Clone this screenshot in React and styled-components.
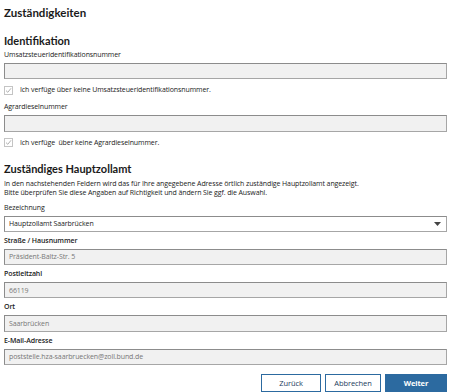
import React from "react";
import styled, { createGlobalStyle } from "styled-components";

const Global = createGlobalStyle`
  html, body {
    margin: 0;
    padding: 0;
    background: #fff;
  }
  body {
    font-family: "Open Sans", "Liberation Sans", sans-serif;
    color: #1a1a1a;
  }
`;

const Page = styled.div`
  width: 450px;
  height: 392px;
  box-sizing: border-box;
  padding: 5px 3px 0 4px;
  display: flex;
  flex-direction: column;
  overflow: hidden;
`;

const Title = styled.h1`
  margin: 0;
  font-family: Lato, "Open Sans", sans-serif;
  font-size: 11.5px;
  line-height: 16px;
  font-weight: 700;
`;

const Section = styled.h2`
  margin: ${(p) => p.$top}px 0 0;
  font-family: Lato, "Open Sans", sans-serif;
  font-size: 11px;
  line-height: 14px;
  font-weight: 700;
`;

const Label = styled.label`
  display: block;
  margin-top: ${(p) => p.$top ?? 4}px;
  font-size: 7px;
  line-height: 10px;
  font-weight: ${(p) => (p.$bold ? 600 : 400)};
  letter-spacing: -0.1px;
`;

const Field = styled.div`
  box-sizing: border-box;
  height: 18px;
  margin-top: 3px;
  border: 1px solid #a6a6a6;
  border-left-color: #8c8c8c;
  border-top-color: #8c8c8c;
  background: ${(p) => (p.$white ? "#fff" : "#f1f1f1")};
  display: flex;
  align-items: center;
  justify-content: space-between;
  padding: 0 5px 0 4px;
  font-size: 7px;
  letter-spacing: -0.1px;
  color: ${(p) => (p.$white ? "#222" : "#777")};
`;

const CheckRow = styled.div`
  display: flex;
  align-items: center;
  gap: 7px;
  margin-top: ${(p) => p.$top ?? 6}px;
  font-size: 7px;
  line-height: 10px;
  letter-spacing: -0.1px;
`;

const Box = styled.span`
  width: 7px;
  height: 7px;
  border: 1px solid #c4c4c4;
  display: flex;
  align-items: center;
  justify-content: center;
  flex: none;
`;

const Text = styled.p`
  margin: 3px 0 0;
  font-size: 7px;
  line-height: 9px;
  letter-spacing: -0.1px;
`;

const Actions = styled.div`
  display: flex;
  justify-content: flex-end;
  gap: 4px;
  margin-top: 9px;
`;

const Button = styled.button`
  box-sizing: border-box;
  height: 18px;
  width: ${(p) => p.$w}px;
  font-family: inherit;
  font-size: 7.5px;
  font-weight: ${(p) => (p.$primary ? 700 : 400)};
  letter-spacing: -0.1px;
  color: ${(p) => (p.$primary ? "#fff" : "#1a3a5c")};
  background: ${(p) => (p.$primary ? "#2c6aa0" : "#fff")};
  border: 1px solid #2c6aa0;
  padding: 0;
`;

const Check = () => (
  <Box>
    <svg width="7" height="7" viewBox="0 0 7 7">
      <path d="M1 3.6 L2.8 5.3 L6 1.3" fill="none" stroke="#b0b0b0" strokeWidth="1" />
    </svg>
  </Box>
);

const Caret = () => (
  <svg width="7" height="4" viewBox="0 0 7 4">
    <path d="M0 0 H7 L3.5 4 Z" fill="#444" />
  </svg>
);

export default function App() {
  return (
    <>
      <Global />
      <Page>
        <Title>Zuständigkeiten</Title>
        <Section $top={13}>Identifikation</Section>
        <Label $top={2}>Umsatzsteueridentifikationsnummer</Label>
        <Field />
        <CheckRow>
          <Check />
          Ich verfüge über keine Umsatzsteueridentifikationsnummer.
        </CheckRow>
        <Label $top={7}>Agrardieselnummer</Label>
        <Field />
        <CheckRow>
          <Check />
          Ich verfüge&nbsp; über keine Agrardieselnummer.
        </CheckRow>
        <Section $top={14}>Zuständiges Hauptzollamt</Section>
        <Text>
          In den nachstehenden Feldern wird das für Ihre angegebene Adresse örtlich zuständige Hauptzollamt angezeigt.
          <br />
          Bitte überprüfen Sie diese Angaben auf Richtigkeit und ändern Sie ggf. die Auswahl.
        </Text>
        <Label $top={6}>Bezeichnung</Label>
        <Field $white>
          Hauptzollamt Saarbrücken
          <Caret />
        </Field>
        <Label $bold>Straße / Hausnummer</Label>
        <Field>Präsident-Baltz-Str. 5</Field>
        <Label $bold>Postleitzahl</Label>
        <Field>66119</Field>
        <Label $bold>Ort</Label>
        <Field>Saarbrücken</Field>
        <Label $bold>E-Mail-Adresse</Label>
        <Field>poststelle.hza-saarbruecken@zoll.bund.de</Field>
        <Actions>
          <Button $w={60}>Zurück</Button>
          <Button $w={56}>Abbrechen</Button>
          <Button $w={62} $primary>Weiter</Button>
        </Actions>
      </Page>
    </>
  );
}
